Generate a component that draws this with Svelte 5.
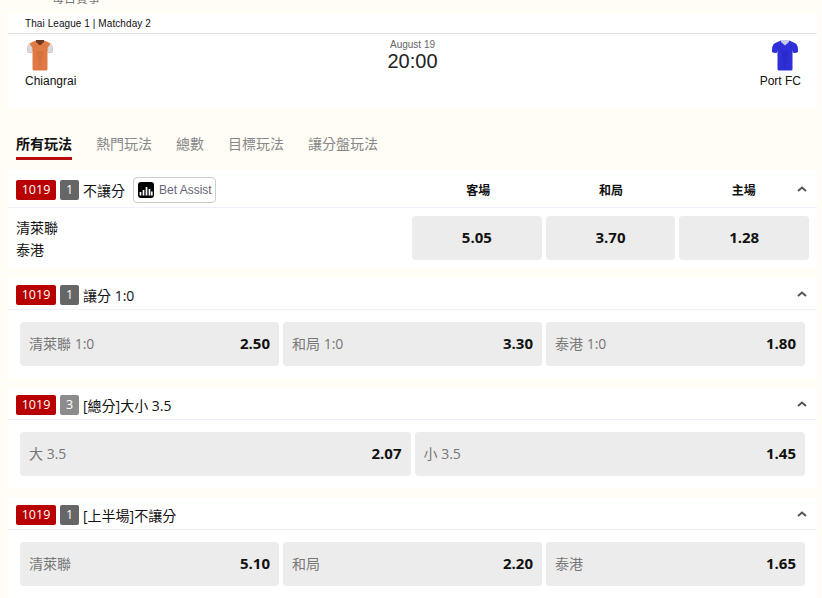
<script>
	const markets = [
		{
			code: '1019', count: '1', countTone: 'dark', title: '讓分 1:0',
			odds: [
				{ label: '清萊聯 1:0', price: '2.50' },
				{ label: '和局 1:0', price: '3.30' },
				{ label: '泰港 1:0', price: '1.80' }
			]
		},
		{
			code: '1019', count: '3', countTone: 'light', title: '[總分]大小 3.5',
			odds: [
				{ label: '大 3.5', price: '2.07' },
				{ label: '小 3.5', price: '1.45' }
			]
		},
		{
			code: '1019', count: '1', countTone: 'dark', title: '[上半場]不讓分',
			odds: [
				{ label: '清萊聯', price: '5.10' },
				{ label: '和局', price: '2.20' },
				{ label: '泰港', price: '1.65' }
			]
		}
	];
	const tabs = ['所有玩法', '熱門玩法', '總數', '目標玩法', '讓分盤玩法'];
	const active = 0;
	const mainOdds = ['5.05', '3.70', '1.28'];
	const mainCols = ['客場', '和局', '主場'];
</script>

{#snippet shirt(body, shade, sleeve, collar)}
	<svg class="shirt" width="28" height="32" viewBox="0 0 28 32" aria-hidden="true">
		<path d="M10 1.500 Q6 3 3.500 4.500 Q1.800 5.500 1.500 8 L1 13 Q3.500 14 6 13.500 L6.500 11 L6.500 30 Q6.500 31.500 8 31.500 L20 31.500 Q21.500 31.500 21.500 30 L21.500 11 L22 13.500 Q24.500 14 27 13 L26.500 8 Q26.200 5.500 24.500 4.500 Q22 3 18 1.500 Z" fill={body} />
		<path d="M1.500 8 L1 13 Q3.500 14 6 13.500 L6.500 9 L3.500 4.500 Q1.800 5.500 1.500 8 Z M26.500 8 L27 13 Q24.500 14 22 13.500 L21.500 9 L24.500 4.500 Q26.200 5.500 26.500 8 Z" fill={sleeve} />
		<path d="M10.500 12 L14 31.500 L17.500 12 Z" fill={shade} opacity="0.25" />
		<path d="M10 1 L18 1 L18 3 L14 6.500 L10 3 Z" fill={collar} />
	</svg>
{/snippet}

{#snippet chevron()}
	<svg class="chev" width="10" height="6" viewBox="0 0 10 6" aria-hidden="true">
		<path d="M1 5 L5 1.500 L9 5" fill="none" stroke="#555" stroke-width="2" />
	</svg>
{/snippet}

<div class="page">
	<div class="crumb">每日賽事</div>

	<section class="match">
		<div class="league">Thai League 1 | Matchday 2</div>
		<div class="teams">
			<div class="team home">
				{@render shirt('#e07a45', '#b85a2c', '#d9d9d9', '#6b3a22')}
				<span>Chiangrai</span>
			</div>
			<div class="kick">
				<span class="date">August 19</span>
				<span class="time">20:00</span>
			</div>
			<div class="team away">
				{@render shirt('#2f2fd8', '#1c1ca0', '#2f2fd8', '#c8c8ee')}
				<span>Port FC</span>
			</div>
		</div>
	</section>

	<nav class="tabs">
		{#each tabs as t, i (t)}
			<span class="tab" class:on={i === active}>{t}</span>
		{/each}
	</nav>

	<section class="market first">
		<header class="mhead tall">
			<span class="code">1019</span>
			<span class="count dark">1</span>
			<span class="title">不讓分</span>
			<span class="assist">
				<svg width="16" height="16" viewBox="0 0 16 16" aria-hidden="true">
					<rect width="16" height="16" rx="3" fill="#000" />
					<path d="M2.500 10v3.500M5.500 8v5.500M8.500 5v8.500M11.500 7v6.500M13.800 9.500v4" stroke="#fff" stroke-width="1.700" fill="none" />
				</svg>
				Bet Assist
			</span>
			<div class="cols">
				{#each mainCols as c (c)}
					<span>{c}</span>
				{/each}
			</div>
			{@render chevron()}
		</header>
		<div class="mainrow">
			<div class="names">
				<span>清萊聯</span>
				<span>泰港</span>
			</div>
			<div class="mainodds">
				{#each mainOdds as o (o)}
					<button class="oddbtn center">{o}</button>
				{/each}
			</div>
		</div>
	</section>

	{#each markets as m (m.title)}
		<section class="market">
			<header class="mhead">
				<span class="code">{m.code}</span>
				<span class="count {m.countTone}">{m.count}</span>
				<span class="title">{m.title}</span>
				<span class="grow"></span>
				{@render chevron()}
			</header>
			<div class="oddrow">
				{#each m.odds as o (o.label)}
					<button class="oddbtn">
						<span class="lbl">{o.label}</span>
						<span class="price">{o.price}</span>
					</button>
				{/each}
			</div>
		</section>
	{/each}
</div>

<style>
	:global(body) { margin: 0; background: #fffdf6; overflow: hidden; }
	.page { height: 598px; overflow: hidden; padding: 0 5px 0 8px; font-family: "Open Sans", "Noto Sans CJK TC", sans-serif; color: #111; }
	.crumb { margin-top: -9px; padding-left: 44px; font-size: 12px; line-height: 15px; color: #777; height: 23px; box-sizing: border-box; }
	.match { background: #fff; height: 94px; }
	.league { height: 19px; line-height: 19px; padding-left: 17px; font-size: 10px; letter-spacing: 0.08px; font-family: "Liberation Sans", sans-serif; border-bottom: 1px solid #e2e2e2; }
	.teams { display: flex; justify-content: space-between; padding: 5px 16px 0 17px; }
	.team { display: flex; flex-direction: column; font-family: "Liberation Sans", sans-serif; font-size: 12px; line-height: 14px; gap: 3px; }
	.team.home { align-items: flex-start; }
	.team.home .shirt { margin-left: 1px; }
	.team.away { align-items: flex-end; }
	.team.away .shirt { margin-right: 2px; }
	.shirt { display: block; }
	.kick { display: flex; flex-direction: column; align-items: center; font-family: "Liberation Sans", sans-serif; color: #222; padding-right: 11px; }
	.date { font-size: 10px; line-height: 11px; color: #666; }
	.time { font-size: 20px; line-height: 23px; }
	.tabs { display: flex; gap: 24px; height: 52px; padding: 26px 0 0 8px; box-sizing: border-box; align-items: flex-start; margin-bottom: 10px; }
	.tab { font-size: 14px; line-height: 20px; height: 26px; box-sizing: border-box; color: #888; }
	.tab.on { color: #111; font-weight: 700; border-bottom: 3px solid #b80c0c; }
	.market { background: #fff; height: 100px; margin-bottom: 10px; }
	.market.first { height: 98px; }
	.mhead { display: flex; align-items: center; height: 31px; border-bottom: 1px solid #f0f0fa; padding: 0 10px 0 8px; gap: 4px; }
	.mhead .code, .mhead .count, .mhead .title, .mhead .chev { position: relative; top: 1px; }
	.mhead.tall { height: 37px; }
	.assist, .cols { position: relative; top: 1px; }
	.code { width: 40px; height: 20px; border-radius: 2px; background: #b80000; color: #fff; font-size: 12.500px; line-height: 20px; text-align: center; }
	.count { width: 19px; height: 20px; border-radius: 2px; color: #fff; font-size: 12.500px; line-height: 20px; text-align: center; }
	.count.dark { background: #666; }
	.count.light { background: #8c8c8c; }
	.title { font-size: 14px; color: #111; }
	.assist { display: flex; align-items: center; gap: 5px; height: 24px; margin-left: 4px; padding: 0 3px 0 4px; border: 1px solid #ccc; border-radius: 4px; font-family: "Liberation Sans", sans-serif; font-size: 12px; color: #667; }
	.cols { display: flex; margin-left: auto; width: 398px; }
	.cols span { flex: 1; text-align: center; font-size: 12px; font-weight: 700; }
	.grow { flex: 1; }
	.chev { flex: none; margin-bottom: 1px; }
	.cols + .chev { margin-left: -17px; }
	.mainrow { display: flex; justify-content: space-between; padding: 8px 8px 0 8px; }
	.names { display: flex; flex-direction: column; font-size: 14px; line-height: 22px; padding-top: 1px; }
	.mainodds { display: flex; gap: 4px; width: 397px; }
	.oddbtn { flex: 1; min-width: 0; display: flex; align-items: center; justify-content: space-between; height: 44px; padding: 0 9px 2px; border: 0; border-radius: 4px; background: #ececec; font-family: inherit; font-size: 14px; color: #111; }
	.oddbtn.center { justify-content: center; font-weight: 700; font-size: 15px; }
	.oddrow { display: flex; gap: 4px; padding: 12px 12px 0; }
	.lbl { color: #777; }
	.price { font-weight: 700; font-size: 15px; }
</style>
